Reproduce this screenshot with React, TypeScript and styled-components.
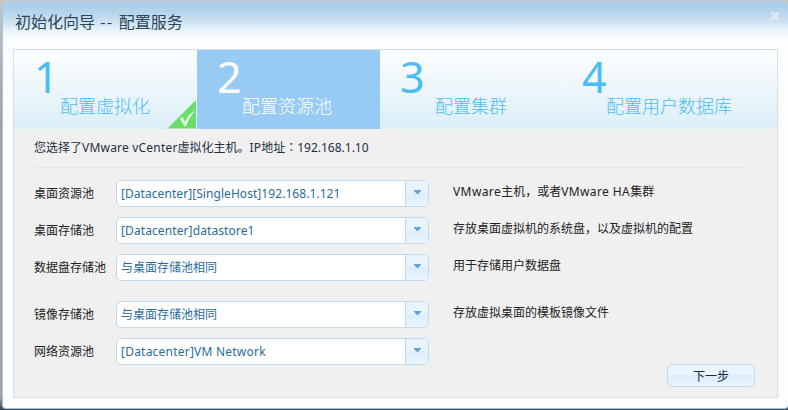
import React from "react";
import styled, { createGlobalStyle } from "styled-components";

const GlobalStyle = createGlobalStyle`
  * { box-sizing: border-box; }
  body {
    margin: 0;
    background: #a5a5a5;
    font-family: "Noto Sans", "Noto Sans CJK SC", sans-serif;
    font-size: 12px;
    overflow: hidden;
  }
`;

const Screen = styled.div`
  width: 788px;
  height: 410px;
  padding: 1px 0 0 2px;
  background: linear-gradient(#c5c5c5, #a2a2a2 30%, #a2a2a2 97%, #3f4d59 99.6%);
`;

const Dialog = styled.div`
  width: 786px;
  height: 408px;
  border: 1px solid #9dc6e6;
  border-top-color: #b3d0e2;
  border-right: 0;
  border-radius: 6px 5px 4px 4px;
  background: #fcfefe;
  overflow: hidden;
`;

const TitleBar = styled.header`
  display: flex;
  align-items: flex-start;
  justify-content: space-between;
  height: 47px;
  padding: 9px 8px 0 12px;
  background: linear-gradient(#a3cae6 0, #b9d7ec 12px, #d2e6f3 22px, #e8f4fa 28px, #fafdfe 37px, #fcfefe 40px);
`;

const Title = styled.h1`
  margin: 0;
  font-size: 16px;
  font-weight: 400;
  line-height: 20px;
  color: #2c4558;
  font-family: "Noto Sans CJK SC", sans-serif;
  white-space: pre;
`;

const Dashes = styled.span`
  letter-spacing: 1.35px;
`;

const CloseIcon = styled.svg`
  width: 10px;
  height: 10px;
`;

const Panel = styled.main`
  width: 765px;
  height: 349px;
  margin-left: 10px;
  border: 1px solid #d2e0ea;
  background: #f0f0f0;
`;

const Steps = styled.nav`
  display: grid;
  grid-template-columns: 183px 183px 182px 1fr;
  height: 79px;
  background: linear-gradient(#fcfeff, #dceef7);
`;

const Step = styled.div<{ $active?: boolean; $divider?: boolean; $indent: number }>`
  position: relative;
  padding: 5px 0 0 ${(p) => p.$indent}px;
  color: ${(p) => (p.$active ? "#fff" : "#4bbdf4")};
  background: ${(p) => (p.$active ? "#97cbf3" : "transparent")};

  &::after {
    content: "";
    display: ${(p) => (p.$divider ? "block" : "none")};
    position: absolute;
    right: 0;
    top: 12px;
    width: 1px;
    height: 60px;
    background: linear-gradient(transparent, #f7fcff 50%, transparent);
  }
`;

const StepNumber = styled.div`
  height: 43px;
  font-size: 43px;
  line-height: 43px;
`;

const StepName = styled.div<{ $shift: number }>`
  margin: -5px 0 0 ${(p) => p.$shift}px;
  font-family: "Noto Sans CJK SC", sans-serif;
  font-size: 18px;
  font-weight: 300;
  line-height: 24px;
  white-space: nowrap;
`;

const DoneBadge = styled.svg`
  position: absolute;
  right: 1px;
  bottom: 0;
  width: 29px;
  height: 29px;
`;

const Content = styled.section`
  padding: 9px 31px 0 20px;
`;

const Intro = styled.p`
  height: 29px;
  margin: 0;
  line-height: 20px;
  color: #1b303f;
  white-space: nowrap;
`;

const Divider = styled.div`
  height: 2px;
  background: linear-gradient(#e2e8ed 50%, #e9eef2 50%);
`;

const Form = styled.div`
  padding-top: 11px;
`;

const Row = styled.div<{ $gap: number }>`
  display: grid;
  grid-template-columns: 82px 313px 1fr;
  height: 27px;
  margin-bottom: ${(p) => p.$gap}px;
`;

const Label = styled.label`
  line-height: 27px;
  color: #222;
  white-space: nowrap;
`;

const Select = styled.div`
  display: grid;
  grid-template-columns: 1fr 23px;
  border: 1px solid #bfd9ed;
  border-radius: 5px;
  background: #fff;
  overflow: hidden;
`;

const Value = styled.div`
  padding-left: 4px;
  line-height: 25px;
  color: #2a6b9c;
  white-space: nowrap;
`;

const Trigger = styled.div`
  padding: 9px 0 0 8px;
  border-left: 1px solid #bfd9ed;
  background: linear-gradient(#e8f3fc 50%, #dcecfa 50%, #e9f5fe);
`;

const Arrow = styled.svg`
  display: block;
  width: 7px;
  height: 4px;
`;

const Hint = styled.div`
  padding-left: 24px;
  line-height: 23px;
  color: #222;
  white-space: nowrap;
`;

const Latin = styled.span<{ $track: number }>`
  letter-spacing: ${(p) => p.$track}px;
  white-space: pre;
`;

const Colon = styled.span`
  font-family: "Noto Sans CJK TC", sans-serif;
  line-height: 1;
`;

const Footer = styled.footer`
  display: flex;
  justify-content: flex-end;
  padding-right: 22px;
  margin-top: -1px;
`;

const NextButton = styled.button`
  width: 88px;
  height: 23px;
  padding: 0;
  border: 1px solid #bfd9ed;
  border-radius: 5px;
  background: linear-gradient(#e9f4fc 50%, #dcecfa 50%, #e9f5fe);
  color: #182c3a;
  font: 12px/20px "Noto Sans CJK SC", sans-serif;
`;

const rows = [
  {
    label: "桌面资源池",
    gap: 10,
    value: <Latin $track={0.06}>[Datacenter][SingleHost]192.168.1.121</Latin>,
    hint: <><Latin $track={0.4}>VMware</Latin>主机，或者<Latin $track={0.4}>VMware HA</Latin>集群</>,
  },
  {
    label: "桌面存储池",
    gap: 10,
    value: <Latin $track={0.1}>[Datacenter]datastore1</Latin>,
    hint: "存放桌面虚拟机的系统盘，以及虚拟机的配置",
  },
  { label: "数据盘存储池", gap: 20, value: "与桌面存储池相同", hint: "用于存储用户数据盘" },
  { label: "镜像存储池", gap: 10, value: "与桌面存储池相同", hint: "存放虚拟桌面的模板镜像文件" },
  { label: "网络资源池", gap: 0, value: <Latin $track={0.22}>[Datacenter]VM Network</Latin>, hint: "" },
];

const steps = [
  { name: "配置虚拟化", indent: 20, shift: 26, done: true },
  { name: "配置资源池", indent: 20, shift: 25, active: true },
  { name: "配置集群", indent: 20, shift: 35, divider: true },
  { name: "配置用户数据库", indent: 20, shift: 24 },
];

export default function App() {
  return (
    <>
      <GlobalStyle />
      <Screen>
        <Dialog>
          <TitleBar>
            <Title>初始化向导<Dashes> -- </Dashes>配置服务</Title>
            <CloseIcon viewBox="0 0 10 10">
              <path d="M1.5 1.5 8.5 8.5M8.5 1.5 1.5 8.5" stroke="#dde9f7" strokeWidth="3" />
            </CloseIcon>
          </TitleBar>
          <Panel>
            <Steps>
              {steps.map((s, i) => (
                <Step key={s.name} $active={s.active} $divider={s.divider || s.done} $indent={s.indent}>
                  <StepNumber>{i + 1}</StepNumber>
                  <StepName $shift={s.shift}>{s.name}</StepName>
                  {s.done && (
                    <DoneBadge viewBox="0 0 29 29">
                      <path d="M29 0V29H0Z" fill="#6add6b" />
                      <path d="M0 28.5H29" stroke="#a5eaaa" />
                      <path d="M13 18.5 15.5 17 18.3 22C20 17.5 23 13.5 26.5 11L27 12C23.5 16 20.5 21 19.2 26H17.5Z" fill="#e8ffe5" />
                    </DoneBadge>
                  )}
                </Step>
              ))}
            </Steps>
            <Content>
              <Intro>
                您选择了<Latin $track={0.2}>VMware vCenter</Latin>虚拟化主机。<Latin $track={0.1}>IP</Latin>地址<Colon>：</Colon><Latin $track={0}>192.168.1.10</Latin>
              </Intro>
              <Divider />
              <Form>
                {rows.map((r) => (
                  <Row key={r.label} $gap={r.gap}>
                    <Label>{r.label}</Label>
                    <Select>
                      <Value>{r.value}</Value>
                      <Trigger>
                        <Arrow viewBox="0 0 7 4"><path d="M0 0H7V1L4 4H3L0 1Z" fill="#61a5d2" /></Arrow>
                      </Trigger>
                    </Select>
                    <Hint>{r.hint}</Hint>
                  </Row>
                ))}
              </Form>
            </Content>
            <Footer>
              <NextButton>下一步</NextButton>
            </Footer>
          </Panel>
        </Dialog>
      </Screen>
    </>
  );
}
